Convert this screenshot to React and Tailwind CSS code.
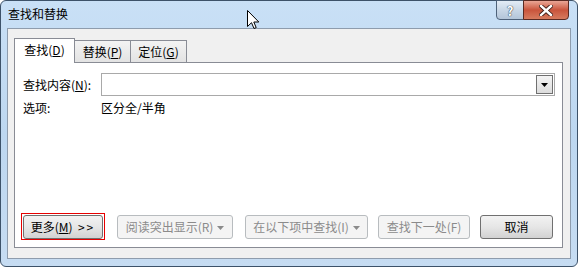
const F = "font-['Microsoft_YaHei','Noto_Sans_CJK_SC',sans-serif]";

function DisabledBtn({ children, w, arrow }) {
  return (
    <div className={`${w} h-[24px] flex items-center justify-center rounded-[3px] border border-[#b8bcbf] bg-[#f4f4f4] text-[#8b8b8b]`}>
      <span>{children}</span>
      {arrow && (
        <svg width="7" height="4" viewBox="0 0 7 4" className="ml-[4px] mt-[1px]">
          <path d="M0 0 H7 L3.5 4 Z" fill="#8b8b8b" />
        </svg>
      )}
    </div>
  );
}

export default function App() {
  return (
    <div className={`relative w-[578px] h-[267px] overflow-hidden bg-white ${F} text-[12px] text-black`}>
      <div className="w-[578px] h-[267px] flex flex-col rounded-[6px] border border-[#3d5269] bg-gradient-to-b from-[#c9e0f6] via-[#bdd7f0] to-[#c6dcf2]">
        {/* title bar */}
        <div className="h-[27px] flex items-start">
          <div className="pl-[7px] pt-[5px] leading-[16px] text-[12px] text-black">查找和替换</div>
          <div className="ml-auto mr-[8px] flex -mt-[1px]">
            <div className="w-[28px] h-[20px] flex items-center justify-center rounded-bl-[4px] border border-[#4e627a] bg-gradient-to-b from-[#e3ecf6] via-[#c9d7e6] to-[#b3c5d9]">
              <span className="font-bold text-[13px] leading-none text-white [text-shadow:0_0_1px_#1f2d3d,0_0_1px_#1f2d3d]">?</span>
            </div>
            <div className="w-[46px] h-[20px] -ml-[1px] flex items-center justify-center rounded-br-[4px] border border-[#5a2a22] bg-gradient-to-b from-[#e9a696] via-[#c9543c] to-[#d67b5f]">
              <svg width="14" height="11" viewBox="0 0 14 11">
                <path d="M2 1 L12 10 M12 1 L2 10" stroke="#3a1a14" strokeWidth="4.2" strokeLinecap="square" />
                <path d="M2 1 L12 10 M12 1 L2 10" stroke="#ffffff" strokeWidth="2.4" strokeLinecap="square" />
              </svg>
            </div>
          </div>
        </div>
        {/* client */}
        <div className="mx-[6px] mb-[6px] h-[231px] border border-[#8e9cad] bg-[#f0f0f0] pl-[6px] pt-[9px]">
          {/* tabs */}
          <div className="relative z-10 flex items-end h-[25px] -mb-[1px]">
            <div className="w-[61px] h-[25px] flex items-center justify-center border-l border-t border-r border-[#898c95] bg-white pb-[2px]">
              <span>查找(<u>D</u>)</span>
            </div>
            <div className="w-[56px] h-[22px] mb-[1px] flex items-center justify-center border-t border-r border-[#898c95] bg-gradient-to-b from-[#f3f3f3] to-[#e3e3e3]">
              <span>替换(<u>P</u>)</span>
            </div>
            <div className="w-[56px] h-[22px] mb-[1px] flex items-center justify-center border-t border-r border-[#898c95] bg-gradient-to-b from-[#f3f3f3] to-[#e3e3e3]">
              <span>定位(<u>G</u>)</span>
            </div>
          </div>
          {/* panel */}
          <div className="w-[549px] h-[186px] border border-[#898c95] bg-white flex flex-col pt-[10px] pl-[8px] pb-[8px]">
            <div className="flex items-center h-[23px]">
              <div className="w-[78px]">查找内容(<u>N</u>):</div>
              <div className="w-[454px] h-[23px] border border-[#a9a9a9] bg-white flex justify-end items-stretch p-[1px]">
                <div className="w-[17px] border border-[#707070] bg-gradient-to-b from-[#f4f4f4] to-[#dcdcdc] flex items-center justify-center">
                  <svg width="7" height="4" viewBox="0 0 7 4"><path d="M0 0 H7 L3.5 4 Z" fill="#000" /></svg>
                </div>
              </div>
            </div>
            <div className="flex items-center h-[16px] mt-[4px]">
              <div className="w-[78px]">选项:</div>
              <div>区分全/半角</div>
            </div>
            <div className="mt-auto flex items-center">
              <div className="relative">
                <div className="w-[80px] h-[24px] flex items-center justify-center rounded-[3px] border border-[#707070] bg-gradient-to-b from-[#f2f2f2] via-[#e6e6e6] to-[#d2d2d2]">
                  <span>更多(<u>M</u>)&nbsp;&nbsp;<span className="tracking-[2px]">&gt;&gt;</span></span>
                </div>
                <span className="absolute -left-[2px] -right-[2px] -top-[2px] -bottom-[1px] border border-[#e60000]" />
              </div>
              <div className="ml-[14px]"><DisabledBtn w="w-[116px]" arrow>阅读突出显示(R)</DisabledBtn></div>
              <div className="ml-[12px]"><DisabledBtn w="w-[123px]" arrow>在以下项中查找(I)</DisabledBtn></div>
              <div className="ml-[10px]"><DisabledBtn w="w-[92px]">查找下一处(F)</DisabledBtn></div>
              <div className="ml-[10px] w-[73px] h-[24px] flex items-center justify-center rounded-[3px] border border-[#707070] bg-gradient-to-b from-[#f2f2f2] via-[#e6e6e6] to-[#d2d2d2]">
                取消
              </div>
            </div>
          </div>
        </div>
      </div>
      {/* mouse cursor */}
      <svg className="absolute left-[247px] top-[10px]" width="13" height="20" viewBox="0 0 13 20">
        <path d="M0.5 0.5 L0.5 16.5 L4.5 12.7 L7 18.5 L9.2 17.6 L6.8 12 L11.8 12 Z" fill="#fff" stroke="#000" strokeWidth="1" strokeLinejoin="miter" />
      </svg>
    </div>
  );
}
